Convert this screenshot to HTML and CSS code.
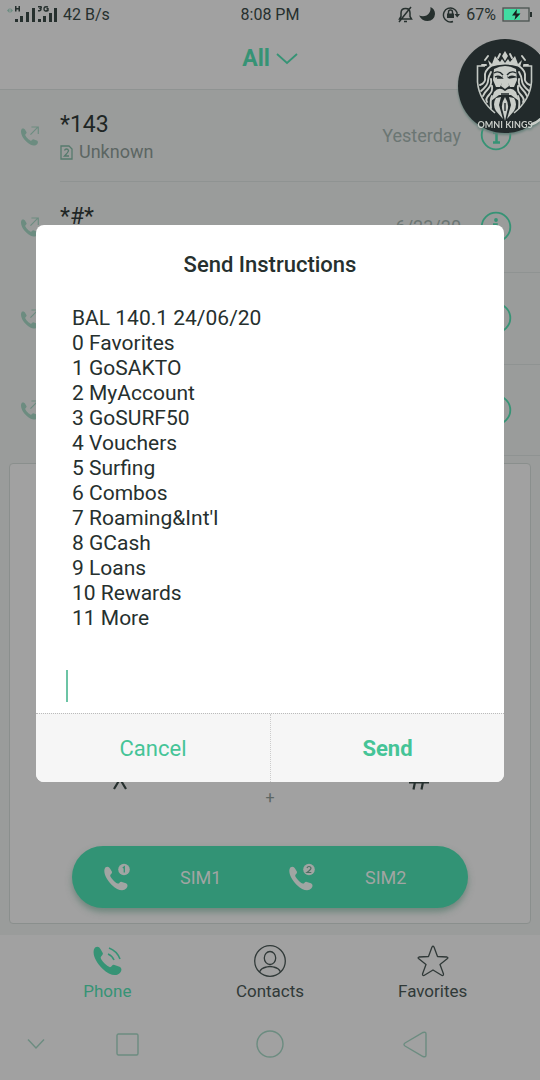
FILE: index.html
```html
<!DOCTYPE html>
<html lang="en">
<head>
    <meta charset="UTF-8">
    <meta name="viewport" content="width=device-width, initial-scale=1.0">
    <title>Phone</title>
    <link rel="stylesheet" href="styles.css">
</head>
<body>

<!-- shared icons -->
<svg class="sprite" width="0" height="0">
    <symbol id="handset" viewBox="0 0 24 24">
        <path d="M2.500 1.200C4 .1 5.900 .6 6.900 2.600L8.600 5.600C9.200 7.200 6.800 8 6.900 9.400C7.300 11.600 12 16.300 14.300 16.900C15.600 17 16 15 17.400 15L22 16.600C24 17.600 23.900 19.800 22.500 21.400C19.500 24.700 14 23.500 8.200 17.900C2.700 12.400-.7 5 2.500 1.200Z"/>
    </symbol>
    <symbol id="outgoing" viewBox="0 0 21 21">
        <g transform="translate(0 2) scale(.8)" fill="currentColor"><use href="#handset" width="24" height="24"/></g>
        <path d="M11 9L19 1M12 1h7.200v7.500" fill="none" stroke="currentColor" stroke-width="1.200"/>
    </symbol>
    <symbol id="info" viewBox="0 0 32 32">
        <circle cx="16" cy="16" r="14.300" fill="none" stroke="currentColor" stroke-width="1.800"/>
        <circle cx="16" cy="9" r="1.900" fill="currentColor"/>
        <path d="M13 13.500H16.500V23.500M13 23.500h7" fill="none" stroke="currentColor" stroke-width="2.500"/>
    </symbol>
</svg>

<div class="screen">
    <div class="status">
        <div class="status-left">
            <svg width="50" height="18" viewBox="0 0 50 18" fill="#26302e">
                <path d="M0 5.500L2.500 3V8ZM6 5.500L3.500 3V8Z" fill="#6d8d82"/>
                <path d="M8 1h1.500v2h2V1H13v5.500h-1.500V4.500h-2v2H8Z"/>
                <path d="M8 14h3v3H8ZM13 11h3v6h-3ZM19 7h3v10h-3ZM25 3h3v14h-3ZM31 14h3v3h-3ZM36 11h3v6h-3ZM42 8h3v9h-3ZM47 3h3v14h-3Z"/>
                <path d="M31 1.700h3q1 1-.8 2q1.800 1-.3 2H31M41 2q-4-1-4 2T41 5.500V3.800h-1.500" fill="none" stroke="#26302e" stroke-width="1.400"/>
            </svg>
            <span>42 B/s</span>
        </div>
        <div class="clock">8:08 PM</div>
        <div class="status-right">
            <svg width="15" height="17" viewBox="0 0 15 17" fill="none" stroke="#26302e" stroke-width="1.500">
                <path d="M1.500 13H13.500L12 10.500V7Q12 2.500 7.500 2.500T3 7V10.500ZM6 15.500h3M1 16L13 1"/>
            </svg>
            <svg width="17" height="16" viewBox="0 0 17 16"><path d="M11.500 1Q12 7 7.500 9.500Q4 11 0 9.500Q3 15 8.500 15Q15.500 14.500 16 8Q16 3 11.500 1Z" fill="#26302e"/></svg>
            <svg width="18" height="17" viewBox="0 0 18 17">
                <path d="M11 15.500A7 7 0 1 1 15 6.500V9" fill="none" stroke="#26302e" stroke-width="1.400"/>
                <path d="M12.500 8H18L15.200 11.500ZM5 7.500h7V12H5Z" fill="#26302e"/>
                <path d="M6.500 8V6Q6.500 4 8.500 4T10.500 6V8" fill="none" stroke="#26302e" stroke-width="1.400"/>
            </svg>
            <span>67%</span>
            <svg width="31" height="15" viewBox="0 0 31 15">
                <rect x="1" y="1" width="26" height="13" fill="none" stroke="#4b5451" stroke-width="1.300"/>
                <path d="M2 2H18V13H2Z" fill="#41dca2"/>
                <path d="M28 5h2v5h-2Z" fill="#26302e"/>
                <path d="M15 2L10 8.500H13.500L12.500 13L18.500 6.500H14.500Z" fill="#16211f"/>
            </svg>
        </div>
    </div>

    <div class="header">
        <button class="filter">All
            <svg width="22" height="13" viewBox="0 0 22 13" fill="none" stroke="currentColor" stroke-width="1.800"><path d="M1 2L11 11L21 2"/></svg>
        </button>
    </div>

    <div class="main">
        <div class="calls">
            <div class="call">
                <svg class="call-icon" width="20" height="20"><use href="#outgoing"/></svg>
                <div class="call-body">
                    <div class="call-text">
                        <div class="number">*143</div>
                        <div class="place">
                            <svg width="13" height="15" viewBox="0 0 13 15" fill="none" stroke="#567a6d" stroke-width="1.300"><path d="M1 1H9L12 4V14H1ZM4.500 5.500Q5 4 6.500 4T8.500 5.500Q8.500 7 4.500 11H9"/></svg>
                            Unknown
                        </div>
                    </div>
                    <div class="date">Yesterday</div>
                    <button class="info" aria-label="Details"><svg width="32" height="32"><use href="#info"/></svg></button>
                </div>
            </div>
            <div class="call">
                <svg class="call-icon" width="20" height="20"><use href="#outgoing"/></svg>
                <div class="call-body">
                    <div class="call-text">
                        <div class="number">*#*</div>
                        <div class="place">&nbsp;</div>
                    </div>
                    <div class="date">6/23/20</div>
                    <button class="info" aria-label="Details"><svg width="32" height="32"><use href="#info"/></svg></button>
                </div>
            </div>
            <div class="call">
                <svg class="call-icon" width="20" height="20"><use href="#outgoing"/></svg>
                <div class="call-body">
                    <div class="call-text"></div>
                    <button class="info" aria-label="Details"><svg width="32" height="32"><use href="#info"/></svg></button>
                </div>
            </div>
            <div class="call">
                <svg class="call-icon" width="20" height="20"><use href="#outgoing"/></svg>
                <div class="call-body">
                    <div class="call-text"></div>
                    <button class="info" aria-label="Details"><svg width="32" height="32"><use href="#info"/></svg></button>
                </div>
            </div>
        </div>

        <div class="dialer">
            <div class="keys">
                <button class="key" aria-label="star"><svg width="24" height="24" viewBox="0 0 24 24" fill="none" stroke="#26302e" stroke-width="2.200"><path d="M12 1V13M2 9L12 13L22 9M12 13L6 23M12 13L18 23"/></svg></button>
                <button class="key zero"><span class="digit">0</span><span class="plus">+</span></button>
                <button class="key" aria-label="hash"><svg width="24" height="24" viewBox="0 0 24 24" fill="none" stroke="#26302e" stroke-width="2.200"><path d="M10 1L5.500 23.500M18 1L13.500 23.500M3 8H23M1 16.500H21"/></svg></button>
            </div>
            <div class="sims">
                <button class="sim">
                    <svg width="28" height="28" viewBox="0 0 28 28">
                        <g fill="#a1a5a3"><use href="#handset" y="3" width="25" height="25"/><circle cx="21" cy="6.500" r="5.800"/></g>
                        <path d="M19.800 5L21.300 3.800V9.500" fill="none" stroke="#329375" stroke-width="1.300"/>
                    </svg>
                    SIM1
                </button>
                <button class="sim">
                    <svg width="28" height="28" viewBox="0 0 28 28">
                        <g fill="#a1a5a3"><use href="#handset" y="3" width="25" height="25"/><circle cx="21" cy="6.500" r="5.800"/></g>
                        <path d="M19 5Q19.500 3.500 21 3.500T23 5Q23 6.500 19 9.500H23.300" fill="none" stroke="#4d6f63" stroke-width="1.200"/>
                    </svg>
                    SIM2
                </button>
            </div>
        </div>
    </div>

    <div class="tabs">
        <a class="tab active" href="#phone">
            <svg width="32" height="32" viewBox="0 0 32 32"><g fill="currentColor"><use href="#handset" x="1" y="1" width="30" height="30"/></g><path d="M17 9Q21 10.500 23 15M18 3Q26 6 29 14" fill="none" stroke="currentColor" stroke-width="1.600"/></svg>
            Phone
        </a>
        <a class="tab" href="#contacts">
            <svg width="32" height="32" viewBox="0 0 32 32" fill="none" stroke="currentColor" stroke-width="1.300"><circle cx="16" cy="16" r="15.300"/><ellipse cx="16" cy="13" rx="5.700" ry="6.500"/><path d="M5.500 27Q7 23 12.500 22Q16 21 19.500 22Q25 23 26.500 27"/></svg>
            Contacts
        </a>
        <a class="tab" href="#favorites">
            <svg width="32" height="32" viewBox="0 0 32 32" fill="none" stroke="currentColor" stroke-width="1.300" stroke-linejoin="round"><path d="M15 2Q16 .500 17 2L20.500 11.500L30 12Q31.500 12.500 30.500 13.500L23 19.500L26.500 29Q26.500 31 25 30.500L16 25L7 30.500Q5.500 31 5.500 29L9 19.500L1.500 13.500Q.500 12.500 2 12L11.500 11.500Z"/></svg>
            Favorites
        </a>
    </div>

    <div class="nav">
        <button aria-label="Hide"><svg width="18" height="12" viewBox="0 0 18 12"><path d="M1 1.500L9 10L17 1.500"/></svg></button>
        <button aria-label="Recent"><svg width="23" height="23" viewBox="0 0 23 23"><rect x="1" y="1" width="21" height="21" rx="1.500"/></svg></button>
        <button aria-label="Home"><svg width="28" height="28" viewBox="0 0 28 28"><circle cx="14" cy="14" r="13"/></svg></button>
        <button aria-label="Back"><svg width="24" height="27" viewBox="0 0 24 27"><path d="M2 12L20 1.500Q23 .500 23 3V24Q23 26.500 20 25.500L2 15Q0 13.500 2 12Z"/></svg></button>
    </div>
</div>

<!-- floating recorder badge -->
<div class="badge">
    <svg width="96" height="96" viewBox="0 0 96 96">
        <circle cx="48" cy="48" r="47" fill="#222a2b"/>
        <path d="M80 13Q88 19 93 31Q87 20 80 13Z" fill="#c9cdc8"/>
        <path d="M74 85Q82 83 90 72Q86 84 74 88Z" fill="#c9cdc8"/>
        <path d="M28 28H20.500V44Q22 62 38 75M66 28H74.500V44Q73 62 57 75" fill="none" stroke="#c3c8c3" stroke-width="1.600"/>
        <g fill="#c9cdc8">
            <path d="M48 13L51 18L48 23L45 18Z"/>
            <path d="M31 22L35 26L38 18L43 24L45 21L48 25L51 21L53 24L58 18L61 26L65 22L63 29Q48 24 33 29Z"/>
            <path d="M37 31Q48 25 59 31L60 42L57 49H53L51 45V38H45V45L43 49H39L36 42Z"/>
            <path d="M46 34H50L52 48L48 51L44 48Z"/>
            <path d="M48 53Q54 48 59 54L62 63L54 57H42L34 63L37 54Q42 48 48 53Z"/>
            <path d="M39 60L44 59L42 67L46 81L39 73Q35 66 39 60ZM57 60L52 59L54 67L50 81L57 73Q61 66 57 60ZM48 59Q53 67 50 74L48 83L46 74Q43 67 48 59Z"/>
        </g>
        <g fill="none" stroke="#c9cdc8" stroke-width="1.900" stroke-linecap="round">
            <path d="M34 28Q27 33 28 39T23 47M34 34Q31 39 31 43T24 53M34 41Q35 47 31 51T26 58M35 48Q36 53 32 57T30 64M35 58Q33 62 34 70"/>
            <path d="M62 28Q69 33 68 39T73 47M62 34Q65 39 65 43T72 53M62 41Q61 47 65 51T70 58M61 48Q60 53 64 57T66 64M61 58Q63 62 62 70"/>
            <path d="M28 22L31 18M29 27H25M68 22L65 18M67 27H71M41 20L43 16M55 20L53 16"/>
        </g>
        <path d="M37 35Q42 32 46 37M50 37Q54 32 59 35M38 39Q42 37 45 40H40M51 40Q54 37 58 39L52 40M44 56H52M48 65V73" fill="none" stroke="#222a2b" stroke-width="1.400"/>
        <text x="48" y="90" text-anchor="middle">OMNI KINGS</text>
    </svg>
</div>

<div class="overlay">
    <form class="dialog" role="dialog" aria-labelledby="dialog-title">
        <h2 id="dialog-title">Send Instructions</h2>
        <ul class="menu">
            <li>BAL 140.1 24/06/20</li>
            <li>0 Favorites</li>
            <li>1 GoSAKTO</li>
            <li>2 MyAccount</li>
            <li>3 GoSURF50</li>
            <li>4 Vouchers</li>
            <li>5 Surfing</li>
            <li>6 Combos</li>
            <li>7 Roaming&amp;Int'l</li>
            <li>8 GCash</li>
            <li>9 Loans</li>
            <li>10 Rewards</li>
            <li>11 More</li>
        </ul>
        <div class="reply">
            <span class="caret"></span>
            <input type="text" aria-label="Reply">
        </div>
        <div class="actions">
            <button type="button">Cancel</button>
            <button type="button" class="send">Send</button>
        </div>
    </form>
</div>

</body>
</html>
```
FILE: styles.css
```css
* {
    box-sizing: border-box;
}
body {
    margin: 0;
    font-family: Roboto, "Liberation Sans", sans-serif;
    color: #26302e;
    background-color: #a1a1a1;
}
button {
    font-family: inherit;
    background: none;
    border: 0;
    padding: 0;
    color: inherit;
    cursor: pointer;
}
svg {
    display: block;
    flex-shrink: 0;
}
.sprite {
    position: absolute;
}
.screen {
    min-height: 100vh;
    display: flex;
    flex-direction: column;
}

/* status bar */
.status {
    height: 28px;
    padding: 0 7px;
    display: grid;
    grid-template-columns: 1fr auto 1fr;
    align-items: center;
    font-size: 16px;
}
.status-left, .status-right {
    display: flex;
    align-items: center;
    gap: 6px;
}
.status-right {
    justify-content: flex-end;
}

/* header */
.header {
    height: 62px;
    display: flex;
    justify-content: center;
    align-items: center;
    border-bottom: 1px solid #8f9392;
}
.filter {
    display: flex;
    align-items: center;
    gap: 6px;
    font-size: 23px;
    font-weight: 700;
    color: #369375;
}

/* call log */
.main {
    flex: 1;
    display: flex;
    flex-direction: column;
    padding-bottom: 11px;
    background-color: #9a9c9b;
}
.calls {
    height: 366px;
    display: grid;
    grid-template-rows: repeat(4, 1fr);
}
.call {
    display: flex;
    align-items: center;
    padding-left: 20px;
    gap: 20px;
}
.call-icon {
    color: #6c8c80;
}
.call-body {
    flex: 1;
    align-self: stretch;
    display: flex;
    align-items: center;
    padding-right: 28px;
    border-bottom: 1px solid #8f9392;
}
.call-text {
    flex: 1;
    padding-top: 6px;
}
.number {
    font-size: 23px;
    line-height: 28px;
    color: #1f2625;
}
.place {
    display: flex;
    align-items: center;
    gap: 6px;
    font-size: 18px;
    line-height: 26px;
    color: #5c6663;
}
.date {
    margin-right: 19px;
    font-size: 18px;
    color: #6b7673;
}
.info {
    color: #369375;
}

/* dialer */
.dialer {
    flex: 1;
    margin: 7px 9px 0;
    padding-bottom: 15px;
    display: flex;
    flex-direction: column;
    justify-content: flex-end;
    background-color: #a1a1a1;
    border: 1px solid #8a8f8d;
    border-radius: 4px;
}
.keys {
    display: grid;
    grid-template-columns: repeat(3, 1fr);
    padding: 0 35px;
    margin-bottom: 40px;
}
.key {
    height: 52px;
    padding-top: 12px;
    display: flex;
    flex-direction: column;
    align-items: center;
}
.key.zero {
    padding-top: 0;
    gap: 4px;
}
.digit {
    font-size: 32px;
    line-height: 32px;
}
.plus {
    font-size: 16px;
    line-height: 16px;
    color: #5c6663;
}
.sims {
    margin: 0 62px;
    height: 62px;
    padding-right: 26px;
    display: grid;
    grid-template-columns: 1fr 1fr;
    border-radius: 31px;
    background-color: #329375;
    box-shadow: 0 4px 6px rgba(60, 110, 90, 0.5);
}
.sim {
    display: flex;
    align-items: center;
    gap: 49px;
    padding-left: 31px;
    font-size: 18px;
    color: #a1a5a3;
}

/* bottom tabs */
.tabs {
    height: 73px;
    padding: 10px 26px 0;
    display: grid;
    grid-template-columns: repeat(3, 1fr);
}
.tab {
    display: flex;
    flex-direction: column;
    align-items: center;
    gap: 4px;
    font-size: 17px;
    line-height: 20px;
    color: #303938;
    text-decoration: none;
}
.tab.active {
    color: #369375;
}

/* system navigation */
.nav {
    height: 72px;
    display: grid;
    grid-template-columns: 72fr 111fr 174fr 116fr 67fr;
}
.nav button {
    display: flex;
    justify-content: center;
    align-items: center;
}
.nav svg {
    fill: none;
    stroke: #6c8c80;
    stroke-width: 1.4;
}

.badge {
    position: absolute;
    top: 38px;
    right: 0;
    width: 83px;
    overflow: hidden;
    filter: drop-shadow(0 2px 1px #66807a);
}
.badge text {
    font-family: Lato, sans-serif;
    font-size: 9px;
    font-weight: 700;
    fill: #c9cdc8;
}

/* dialog */
.overlay {
    position: absolute;
    inset: 0;
    display: flex;
    justify-content: center;
    align-items: center;
    padding: 0 36px 73px;
}
.dialog {
    flex: 1;
    overflow: hidden;
    border-radius: 8px;
    background-color: #fff;
}
.dialog h2 {
    margin: 0;
    padding: 27px 0 28px;
    text-align: center;
    font-size: 22px;
    line-height: 26px;
    font-weight: 500;
}
.menu {
    margin: 0;
    padding: 0 36px;
    list-style: none;
    font-size: 21px;
    line-height: 25px;
}
.reply {
    display: flex;
    height: 82px;
    padding: 39px 30px 11px;
}
.caret {
    width: 2px;
    background-color: #6cc4a5;
}
.reply input {
    flex: 1;
    min-width: 0;
    padding: 0 4px;
    border: 0;
    outline: 0;
    font-family: inherit;
    font-size: 21px;
    background: none;
}
.actions {
    display: grid;
    grid-template-columns: 1fr 1fr;
    border-top: 1px dotted #bbb;
    background-color: #f6f6f6;
}
.actions button {
    height: 68px;
    font-size: 22px;
    color: #45c497;
}
.actions .send {
    font-weight: 700;
    border-left: 1px dotted #ccc;
}
```
